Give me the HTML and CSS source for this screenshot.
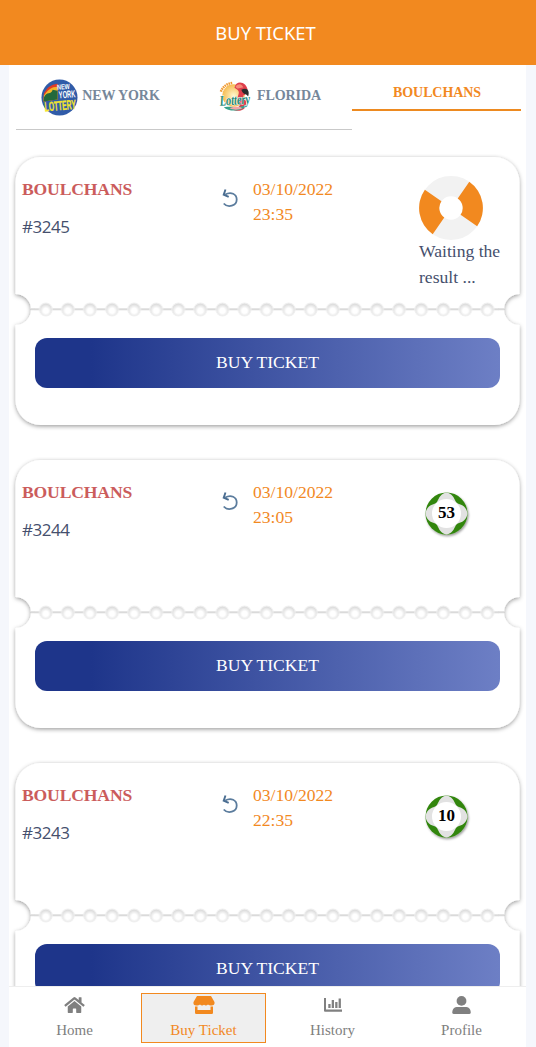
FILE: index.html
```html
<!DOCTYPE html>
<html lang="en">
<head>
<meta charset="utf-8">
<title>Buy Ticket</title>
<link rel="stylesheet" href="styles.css">
</head>
<body>
<svg class="defs" width="0" height="0" aria-hidden="true">
  <defs>
    <filter id="soft" x="-5%" y="-5%" width="110%" height="112%">
      <feDropShadow dx="0" dy="1.3" stdDeviation="2.3" flood-color="#000" flood-opacity=".4"/>
    </filter>
    <filter id="ballshadow" x="-20%" y="-20%" width="150%" height="150%">
      <feDropShadow dx="1" dy="1.5" stdDeviation="1" flood-color="#000" flood-opacity=".4"/>
    </filter>
    <radialGradient id="hole" cy=".6"><stop offset=".4" stop-color="#fff"/><stop offset="1" stop-color="#dedede"/></radialGradient>
    <pattern id="perf" x="25.800" y="0" width="22.08" height="310" patternUnits="userSpaceOnUse">
      <path d="M0 155.3H22.080" stroke="#dadada" stroke-width="2"/>
      <circle cx="11.04" cy="155.5" r="6.4" fill="url(#hole)" stroke="#efefef" stroke-width="1"/>
    </pattern>
    <symbol id="ticket" viewBox="0 0 517 303">
      <path filter="url(#soft)" fill="#fff" d="M31.500 3H485.500A25 25 0 0 1 510.500 28V140A15.500 15.500 0 0 0 510.500 171V246A25 25 0 0 1 485.500 271H31.500A25 25 0 0 1 6.500 246V171A15.500 15.500 0 0 0 6.500 140V28A25 25 0 0 1 31.500 3Z"/>
      <path d="M21.500 155.300H26M489 155.300H495.500" stroke="#dadada" stroke-width="2"/>
      <rect x="25.800" y="146" width="463.700" height="19" fill="url(#perf)"/>
    </symbol>
    <symbol id="undo" viewBox="0 0 16 20">
      <path d="M3.200 6.600C9 3 14.700 6.300 14.700 11.500C14.700 18 6 20.300 1.700 15.500" fill="none" stroke="#5b7c9d" stroke-width="1.800"/>
      <path d="M3.500 1.500L1.700 6.700L6.700 8.900" fill="none" stroke="#4a6d91" stroke-width="1.900"/>
    </symbol>
    <symbol id="ball" viewBox="0 0 48 48">
      <g filter="url(#ballshadow)">
        <circle cx="22.500" cy="22.500" r="21" fill="#32860f"/>
        <path fill="#e2e2e2" d="M22.500 1.500C28 2 30 7 32 11Q33 12.500 35 13C41 14.500 43 19 43.500 22.500C43 26 41 30.500 35 32Q33 32.500 32 34C30 38 28 43 22.500 43.500C17 43 15 38 13 34Q12 32.500 10 32C4 30.500 2 26 1.500 22.500C2 19 4 14.500 10 13Q12 12.500 13 11C15 7 17 2 22.500 1.500Z"/>
        <circle cx="22.500" cy="22.500" r="14.500" fill="#fff"/>
      </g>
    </symbol>
  </defs>
</svg>
<div class="app">
  <header class="header">BUY TICKET</header>
  <main class="page">
    <nav class="tabs">
      <a class="tab">
        <svg class="logo-ny" viewBox="0 0 38 38">
          <circle cx="19" cy="19" r="18.500" fill="#305ba8"/>
          <path d="M3 15C6 9 10 6 17 5V21L2.500 23Z" fill="#e23c24"/>
          <path d="M3 17C7 11 11 8 17 8V21L2.500 23Z" fill="#f2b52b"/>
          <path d="M3 19C6 12 10 17 12 11L17 12V21L2.500 23Z" fill="#22693b"/>
          <g transform="rotate(-5 19 19)" font-family="Liberation Sans" font-weight="bold">
            <text x="17.500" y="11" font-size="7.500" textLength="13" lengthAdjust="spacingAndGlyphs" fill="#fff">NEW</text>
            <text x="18.500" y="20" font-size="10.500" textLength="17" lengthAdjust="spacingAndGlyphs" fill="#fff">YORK</text>
            <text x="3" y="32" font-size="13.500" textLength="32" lengthAdjust="spacingAndGlyphs" fill="#f4e52c" stroke="#f4e52c" stroke-width=".4">LOTTERY</text>
          </g>
        </svg>
        <span>NEW YORK</span>
      </a>
      <a class="tab">
        <svg class="logo-fl" viewBox="0 0 38 38">
          <defs><radialGradient id="sun"><stop offset="0" stop-color="#fff7cc"/><stop offset="1" stop-color="#f6bc53"/></radialGradient></defs>
          <circle cx="18" cy="17" r="11.500" fill="url(#sun)"/>
          <path d="M5 13C7 8 11 4.500 17 4" fill="none" stroke="#f09a32" stroke-width="2.500" stroke-dasharray="1.600 .7"/>
          <path d="M19 9C20 3 26 2 30 6C34 11 33 15 28 17C27 20 32 20 31 27C29 34 20 34 15 30C22 31 27 28 23 23C20 19 26 14 22 11Z" fill="#df3f4c"/>
          <path d="M20 8C23 4 27 5 28 9C25 8 23 12 20 8Z" fill="#f58b79"/>
          <path d="M26 11C32 8 35 12 33 18C31 14 28 17 26 11Z" fill="#292d2d"/>
          <path d="M8 29C17 27 25 31 32 26C28 34 13 34 8 29Z" fill="#36a28b"/>
          <path d="M14 30C19 28 24 28 27 30C23 32 18 32 14 30Z" fill="#f1a4a7"/>
          <text x="4" y="26.500" font-family="Liberation Serif" font-size="15" font-style="italic" font-weight="bold" textLength="31" lengthAdjust="spacingAndGlyphs" transform="rotate(-4 18 24)" fill="#238a77" stroke="#fff" stroke-width="1" paint-order="stroke">Lottery</text>
        </svg>
        <span>FLORIDA</span>
      </a>
      <a class="tab active"><span>BOULCHANS</span></a>
    </nav>
    <section class="tickets">
      <article class="ticket">
        <svg class="shape"><use href="#ticket"/></svg>
        <div class="content">
          <div class="info">
            <div class="draw"><h2>BOULCHANS</h2><p>#3245</p></div>
            <svg class="undo"><use href="#undo"/></svg>
            <time class="date">03/10/2022<br>23:35</time>
            <div class="result waiting">
              <svg class="spinner" viewBox="-32 -32 64 64">
                <circle r="21.800" fill="none" stroke="#f2f2f2" stroke-width="20.200"/>
                <g transform="rotate(-10)" fill="#f2891f">
                  <path d="M8.270 -8.270L22.560 -22.560A31.900 31.900 0 0 1 22.560 22.560L8.270 8.270A11.700 11.700 0 0 0 8.270 -8.270Z"/>
                  <path d="M-8.270 8.270L-22.560 22.560A31.900 31.900 0 0 1 -22.560 -22.560L-8.270 -8.270A11.700 11.700 0 0 0 -8.270 8.270Z"/>
                </g>
              </svg>
              <p>Waiting the<br>result ...</p>
            </div>
          </div>
          <button class="buy">BUY TICKET</button>
        </div>
      </article>
      <article class="ticket">
        <svg class="shape"><use href="#ticket"/></svg>
        <div class="content">
          <div class="info">
            <div class="draw"><h2>BOULCHANS</h2><p>#3244</p></div>
            <svg class="undo"><use href="#undo"/></svg>
            <time class="date">03/10/2022<br>23:05</time>
            <div class="result ball"><svg><use href="#ball"/></svg><b>53</b></div>
          </div>
          <button class="buy">BUY TICKET</button>
        </div>
      </article>
      <article class="ticket">
        <svg class="shape"><use href="#ticket"/></svg>
        <div class="content">
          <div class="info">
            <div class="draw"><h2>BOULCHANS</h2><p>#3243</p></div>
            <svg class="undo"><use href="#undo"/></svg>
            <time class="date">03/10/2022<br>22:35</time>
            <div class="result ball"><svg><use href="#ball"/></svg><b>10</b></div>
          </div>
          <button class="buy">BUY TICKET</button>
        </div>
      </article>
    </section>
  </main>
  <nav class="bottom">
    <a class="item"><svg width="21" height="18" viewBox="0 0 576 512"><path d="M280 148L96 300V464a16 16 0 0 0 16 16l112 0a16 16 0 0 0 16-16V368a16 16 0 0 1 16-16h64a16 16 0 0 1 16 16v96a16 16 0 0 0 16 16h112a16 16 0 0 0 16-16V300L296 148a12 12 0 0 0-16 0zM572 251L488 182V44a12 12 0 0 0-12-12h-56a12 12 0 0 0-12 12v72L318 43a48 48 0 0 0-61 0L4 251a12 12 0 0 0-1 17l25 31a12 12 0 0 0 17 2L280 107a12 12 0 0 1 16 0l235 194a12 12 0 0 0 17-2l26-31a12 12 0 0 0-2-17z"/></svg><span>Home</span></a>
    <a class="item selected"><svg width="22" height="18" viewBox="0 0 22 18"><path d="M4 0H18L21.500 6C22 8.500 20.500 9.500 18.600 9.500C17 9.500 16 9 15 8.400C14 9.500 12.500 9.800 11 8.800C9.500 9.800 8 9.500 7 8.400C6 9 5 9.500 3.400 9.500C1.300 9.500 0 8.500 .5 6ZM2 10.500H4.500V14H17.500V10.500H20V16.800Q20 18 18.800 18H3.200Q2 18 2 16.800Z"/></svg><span>Buy Ticket</span></a>
    <a class="item"><svg width="18" height="18" viewBox="0 0 18 18"><path d="M0 2H2V13.500H18V15.700H1Q0 15.700 0 14.700ZM4.300 8H6.600V12H4.300ZM7.700 4H10V12H7.700ZM11.200 6H13.500V12H11.200ZM14.600 2.500H16.900V12H14.600Z"/></svg><span>History</span></a>
    <a class="item"><svg width="19" height="18" viewBox="0 0 19 18"><circle cx="9.500" cy="4.900" r="4.900"/><path d="M6 11H13C17 11 18.700 13 18.700 16.500Q18.700 18 17.200 18H1.800Q.3 18 .3 16.500C.3 13 2 11 6 11Z"/></svg><span>Profile</span></a>
  </nav>
</div>
</body>
</html>
```
FILE: styles.css
```css
* { box-sizing: border-box; }
body { margin: 0; background: #f5f7fc; font-family: "Liberation Serif", serif; overflow: hidden; }
h2, p { margin: 0; }
.defs { display: block; height: 0; }
.app { height: 1047px; display: flex; flex-direction: column; }
.header {
  flex: 0 0 65px; height: 65px; background: #f2891f; color: #fff; text-align: center;
  font: 18.4px/64px "Noto Sans", sans-serif; padding: 1px 5px 0 0;
}
.page { flex: 1; min-height: 0; overflow: hidden; margin: 0 10px 0 9px; background: #fff; }
.tabs { display: grid; grid-template-columns: 168px 168px 169px; align-items: start; margin-left: 7px; height: 89px; }
.tab {
  height: 65px; border-bottom: 1px solid #c9c9c9; display: flex; justify-content: center; align-items: center;
  gap: 4px; color: #76879a; font-size: 14px; font-weight: bold; padding: 1px 0 0 1px;
}
.tab span { padding-bottom: 4px; letter-spacing: -.1px; }
.logo-ny, .logo-fl { width: 37px; height: 37px; overflow: visible; }
.tab.active { height: 46px; border-bottom: 2px solid #ed8a20; color: #f2891f; padding-top: 15px; }
.ticket { display: grid; height: 303px; }
.shape, .content { grid-area: 1 / 1; }
.shape { width: 517px; height: 303px; }
.content { z-index: 1; padding: 23px 26px 0 13px; }
.info { height: 161px; display: grid; grid-template-columns: 200px 31px 166px 1fr; align-items: start; font-size: 17.6px; }
.draw h2 { color: #cb5c5c; font-size: 17.6px; line-height: 25px; letter-spacing: -.15px; }
.draw p { margin-top: 12px; color: #454f6d; font: 17px/25px "Open Sans", sans-serif; letter-spacing: -.45px; }
.undo { width: 16px; height: 20px; margin-top: 11px; }
.date { color: #f2891f; line-height: 25px; }
.result p { margin-top: -2px; color: #454f6d; line-height: 26px; white-space: nowrap; }
.spinner { display: block; width: 64px; height: 64px; margin-top: -1px; }
.ball { display: grid; width: 48px; height: 48px; margin: 11px 0 0 5px; }
.ball svg, .ball b { grid-area: 1 / 1; }
.ball svg { width: 48px; height: 48px; }
.ball b { z-index: 1; color: #000; width: 45px; line-height: 43px; text-align: center; font-size: 17px; }
.buy {
  display: block; width: 465px; height: 50px; margin-left: 13px; border: 0; border-radius: 12px; padding: 0 0 2px;
  background: linear-gradient(90deg, #1e358a 12%, #6d7fc5 100%); color: #fff; font: 17.6px "Liberation Serif", serif;
}
.bottom {
  flex: 0 0 61px; display: grid; grid-template-columns: repeat(4, 1fr); justify-items: center;
  margin: 0 10px 0 9px; padding: 6px 0 0 1px; background: #fff; border-top: 1px solid #eee;
}
.item {
  width: 125px; height: 50px; border: 1px solid transparent; display: flex; flex-direction: column;
  align-items: center; gap: 8px; padding-top: 2px; color: #808080; font-size: 15px; line-height: 16px;
}
.item svg { fill: currentColor; }
.selected { color: #f2891f; background: #efefef; border-color: #f2891f; }
```
